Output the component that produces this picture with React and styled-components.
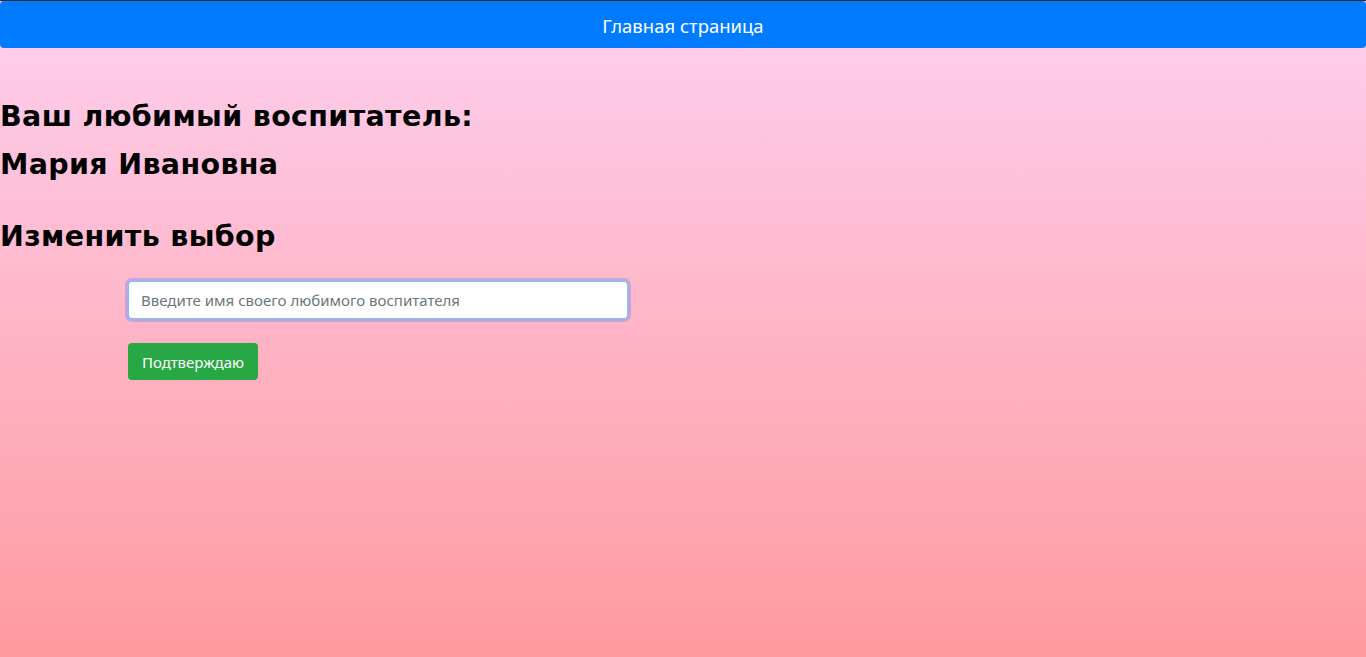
import React from "react";
import styled, { createGlobalStyle } from "styled-components";

const Global = createGlobalStyle`
  html, body, #root { margin: 0; padding: 0; min-height: 100%; height: 100%; }
  html {
    background: linear-gradient(to top, #ff9a9e 0%, #fecfef 99%, #fecfef 100%);
    background-attachment: fixed;
  }
  body {
    font-family: "Noto Sans", "Open Sans", "Liberation Sans", sans-serif;
    color: #000;
    border-top: 1px solid #2a2a2a;
    box-sizing: border-box;
  }
  *, *::before, *::after { box-sizing: border-box; }
`;

const Page = styled.div`
  display: flex;
  flex-direction: column;
`;

const HomeButton = styled.button`
  display: block;
  width: 100%;
  height: 47px;
  padding: 2px 0 0;
  border: none;
  border-radius: 4px;
  background: #007bff;
  color: #fff;
  font-family: inherit;
  font-size: 18.5px;
  cursor: pointer;
`;

const Content = styled.main`
  display: flex;
  flex-direction: column;
  padding-top: 45px;
`;

const Heading = styled.h3`
  margin: 0 0 ${(p) => p.$gap || 0}px 0;
  font-family: "DejaVu Sans", "Noto Sans", sans-serif;
  font-size: 28.5px;
  font-weight: 700;
  line-height: 48px;
  letter-spacing: 0.35px;
`;

const Form = styled.form`
  display: flex;
  flex-direction: column;
  align-items: flex-start;
  gap: 24px;
  padding-left: 128px;
  margin-top: 20px;
`;

const Input = styled.input`
  width: 500px;
  height: 38px;
  padding: 6px 12px;
  font-family: inherit;
  font-size: 15px;
  color: #495057;
  background: #fff;
  border: 1px solid #80bdff;
  border-radius: 4px;
  box-shadow: 0 0 0 3px rgba(0, 123, 255, 0.25);
  outline: none;
  &::placeholder { color: #6c757d; }
`;

const Submit = styled.button`
  height: 37px;
  padding: 0 14px;
  border: none;
  border-radius: 4px;
  background: #28a745;
  color: #fff;
  font-family: inherit;
  font-size: 15px;
  cursor: pointer;
`;

export default function App() {
  return (
    <Page>
      <Global />
      <HomeButton type="button">Главная страница</HomeButton>
      <Content>
        <Heading>Ваш любимый воспитатель:</Heading>
        <Heading $gap={24}>Мария Ивановна</Heading>
        <Heading>Изменить выбор</Heading>
        <Form onSubmit={(e) => e.preventDefault()}>
          <Input autoFocus placeholder="Введите имя своего любимого воспитателя" />
          <Submit type="submit">Подтверждаю</Submit>
        </Form>
      </Content>
    </Page>
  );
}
